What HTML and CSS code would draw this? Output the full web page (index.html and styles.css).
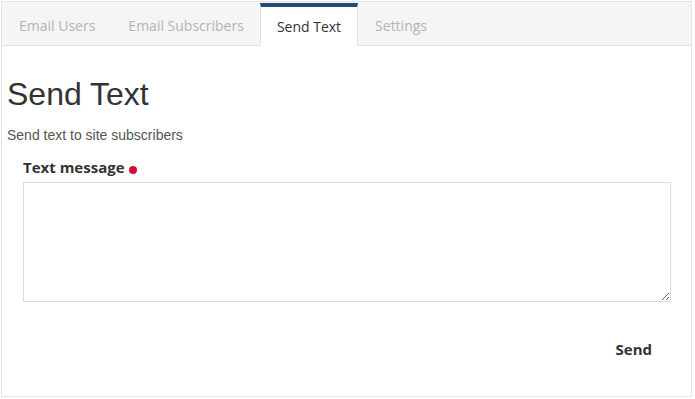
FILE: index.html
```html
<!DOCTYPE html>
<html lang="en">
<head>
    <meta charset="UTF-8">
    <meta name="viewport" content="width=device-width, initial-scale=1.0">
    <title>Send Text</title>
    <link rel="stylesheet" href="styles.css">
</head>
<body>
    <div class="panel">
        <!-- Tabs -->
        <nav class="tabs">
            <a class="tab" href="#">Email Users</a>
            <a class="tab" href="#">Email Subscribers</a>
            <a class="tab active" href="#">Send Text</a>
            <a class="tab" href="#">Settings</a>
        </nav>

        <div class="content">
            <h1>Send Text</h1>
            <p class="subtitle">Send text to site subscribers</p>

            <form class="text-form">
                <label for="message">Text message <span class="required"></span></label>
                <textarea id="message" name="message"></textarea>
                <div class="actions">
                    <button type="submit">Send</button>
                </div>
            </form>
        </div>
    </div>
</body>
</html>
```

FILE: styles.css
```css
/* General Body Styles */
body {
    margin: 0;
    background: #ffffff;
    font-family: 'Open Sans', sans-serif;
}

/* Panel */
.panel {
    margin: 1px;
    width: 691px;
    height: 396px;
    border: 1px solid #e4e4e4;
    box-sizing: border-box;
}

/* Tabs */
.tabs {
    display: flex;
    height: 43px;
    background-color: #f5f5f5;
    border-bottom: 1px solid #e2e2e2;
}

.tab {
    display: block;
    padding: 14px 16px 0 17px;
    font-size: 14px;
    line-height: 20px;
    color: #b4b4b4;
    text-decoration: none;
}

.tab.active {
    margin-top: 1px;
    margin-bottom: -1px;
    padding: 10px 16px 0 16px;
    background: #ffffff;
    color: #333;
    border-top: 4px solid #22497a;
    border-left: 1px solid #e2e2e2;
    border-right: 1px solid #e2e2e2;
}

/* Content */
.content {
    padding: 0 5px;
}

h1 {
    margin: 30px 0 0;
    font-family: 'Liberation Sans', Arial, sans-serif;
    font-size: 32px;
    line-height: 37px;
    font-weight: normal;
    color: #333;
}

.subtitle {
    margin: 14px 0 0;
    font-family: 'Liberation Sans', Arial, sans-serif;
    font-size: 14px;
    line-height: 16px;
    color: #555;
}

/* Form */
.text-form {
    display: flex;
    flex-direction: column;
    padding: 0 20px 0 16px;
    margin-top: 14px;
}

label {
    font-size: 15px;
    line-height: 20px;
    font-weight: bold;
    color: #333;
}

.required {
    display: inline-block;
    width: 8px;
    height: 8px;
    margin-left: 1px;
    border-radius: 50%;
    background-color: #d0103a;
    vertical-align: -1px;
}

textarea {
    margin-top: 5px;
    width: 648px;
    height: 120px;
    border: 1px solid #dcdcdc;
    box-sizing: border-box;
    resize: vertical;
}

.actions {
    display: flex;
    justify-content: flex-end;
    margin-top: 37px;
}

button {
    padding: 0;
    margin-right: 14px;
    border: none;
    background: none;
    font-family: 'Open Sans', sans-serif;
    font-size: 15px;
    line-height: 20px;
    font-weight: bold;
    color: #333;
    cursor: pointer;
}
```
